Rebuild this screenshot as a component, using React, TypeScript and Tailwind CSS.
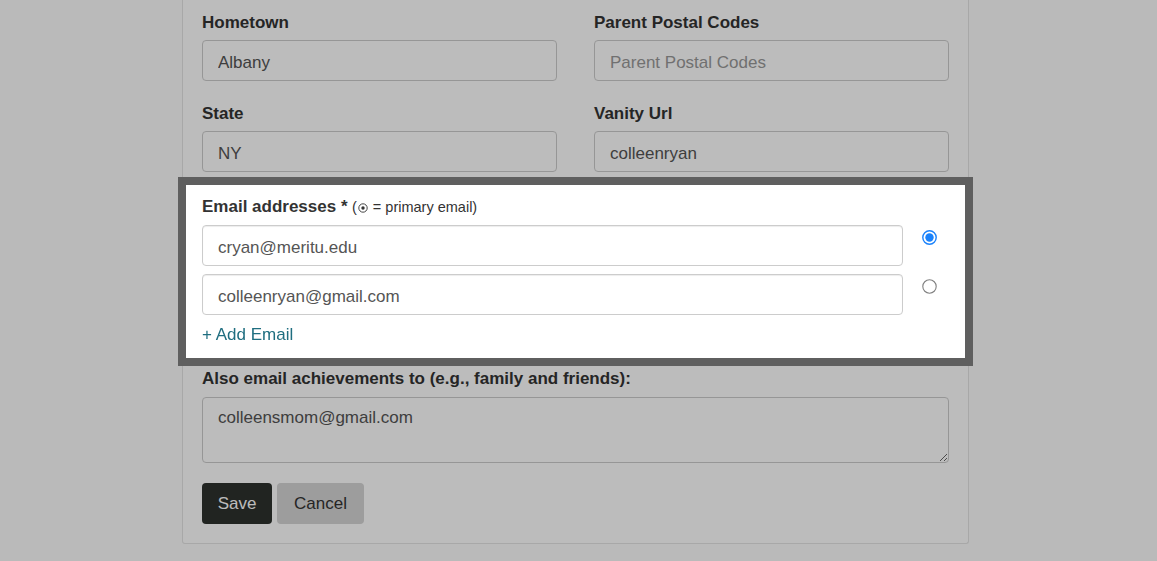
import React from "react";

const font = { fontFamily: '"Liberation Sans", Arial, Helvetica, sans-serif' };

const Field = ({ label, value, placeholder }: { label: string; value?: string; placeholder?: string }) => (
  <div className="flex flex-col">
    <label className="text-[17px] leading-[24px] font-bold text-[#333] mb-[5px]">{label}</label>
    <input
      readOnly
      value={value ?? ""}
      placeholder={placeholder}
      className="h-[41px] w-full rounded-[4px] border border-[#cccccc] bg-white px-[15px] pt-[5px] text-[17px] text-[#555] placeholder:text-[#999] outline-none"
    />
  </div>
);

const Radio = ({ checked }: { checked?: boolean }) => (
  <svg width="15" height="15" viewBox="0 0 15 15">
    {checked ? (
      <>
        <circle cx="7.5" cy="7.5" r="6.7" fill="white" stroke="#1a82fb" strokeWidth="1.4" />
        <circle cx="7.5" cy="7.5" r="4.2" fill="#1a82fb" />
      </>
    ) : (
      <circle cx="7.5" cy="7.5" r="6.7" fill="white" stroke="#808080" strokeWidth="1.1" />
    )}
  </svg>
);

const EmailRow = ({ value, primary }: { value: string; primary?: boolean }) => (
  <div className="flex items-start">
    <input
      readOnly
      value={value}
      className="h-[41px] flex-1 rounded-[4px] border border-[#cccccc] bg-white px-[15px] pt-[5px] text-[17px] text-[#555] shadow-[inset_0_1px_1px_rgba(0,0,0,0.075)] outline-none"
    />
    <div className="w-[46px] pl-[19px] pt-[5px]">
      <Radio checked={primary} />
    </div>
  </div>
);

export default function App() {
  return (
    <div className="relative min-h-[561px] bg-[#fdfdfd] overflow-hidden" style={font}>
      {/* dim layer */}
      <div className="fixed inset-0 z-10 bg-black/[0.262] pointer-events-none" />

      <div className="ml-[182px] w-[787px] h-[544px] border-x border-b border-[#e4e4e4] rounded-b-[3px] bg-white px-[19px] pt-[11px]">
        <div className="grid grid-cols-2 gap-x-[37px] gap-y-[21px]">
          <Field label="Hometown" value="Albany" />
          <Field label="Parent Postal Codes" placeholder="Parent Postal Codes" />
          <Field label="State" value="NY" />
          <Field label="Vanity Url" value="colleenryan" />
        </div>

        {/* highlighted group */}
        <div className="relative z-20 -mx-4 mt-[13px] bg-white px-4 pt-[10px] pb-[11px] outline-8 outline-[#5f5f5f]">
          <div className="text-[#333] leading-[24px] mb-[6px]">
            <span className="text-[17px] font-bold">Email addresses *</span>{" "}
            <span className="text-[14.5px]">
              (
              <svg width="10" height="10" viewBox="0 0 10 10" className="inline-block align-[-1px] mx-[1px]">
                <circle cx="5" cy="5" r="4.2" fill="none" stroke="#333" strokeWidth="0.9" />
                <circle cx="5" cy="5" r="1.7" fill="#333" />
              </svg>{" "}
              = primary email)
            </span>
          </div>
          <div className="flex flex-col gap-[8px]">
            <EmailRow value="cryan@meritu.edu" primary />
            <EmailRow value="colleenryan@gmail.com" />
          </div>
          <a className="mt-[8px] block text-[17px] leading-[24px] text-[#1f6e80] cursor-pointer">+ Add Email</a>
        </div>

        <label className="mt-[9px] block text-[17px] leading-[24px] font-bold text-[#333] mb-[6px]">
          Also email achievements to (e.g., family and friends):
        </label>
        <textarea
          readOnly
          value="colleensmom@gmail.com"
          className="block h-[66px] w-full rounded-[4px] border border-[#cccccc] bg-white px-[15px] pt-[8px] text-[17px] leading-[24px] text-[#555] outline-none"
        />

        <div className="mt-[20px] flex gap-[5px]">
          <button className="h-[41px] w-[70px] rounded-[4px] bg-[#2e312e] text-[17px] text-white">Save</button>
          <button className="h-[41px] w-[87px] rounded-[4px] bg-[#d5d5d5] text-[17px] text-[#333]">Cancel</button>
        </div>
      </div>
    </div>
  );
}
